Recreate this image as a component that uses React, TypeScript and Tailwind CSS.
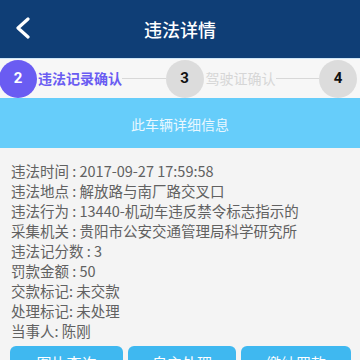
import React from 'react'

const font = { fontFamily: '"Noto Sans CJK SC", Roboto, "Noto Sans", sans-serif' }

const rows = [
  '违法时间 : 2017-09-27 17:59:58',
  '违法地点 : 解放路与南厂路交叉口',
  '违法行为 : 13440-机动车违反禁令标志指示的',
  '采集机关 : 贵阳市公安交通管理局科学研究所',
  '违法记分数 : 3',
  '罚款金额 : 50',
  '交款标记: 未交款',
  '处理标记: 未处理',
  '当事人: 陈刚',
]

function Step({ n, active }: { n: number; active?: boolean }) {
  return (
    <div
      className={`flex h-[38px] w-[38px] shrink-0 items-center justify-center rounded-full text-[15px] font-bold ${
        active ? 'bg-[#6a5cf2] text-white' : 'bg-[#dcdcdc] text-[#111]'
      }`}
      style={{ fontFamily: 'Roboto, "Liberation Sans", sans-serif' }}
    >
      {n}
    </div>
  )
}

export default function App() {
  return (
    <div className="h-[360px] w-[360px] overflow-hidden bg-[#f4f4f4]" style={font}>
      {/* header */}
      <div className="relative flex h-[58px] items-center justify-center bg-[#0f3e76]">
        <svg className="absolute left-[14px] top-[17px]" width="17" height="22" viewBox="0 0 17 22">
          <path d="M14 2 L4 11 L14 20" fill="none" stroke="white" strokeWidth="3.2" strokeLinecap="round" strokeLinejoin="round" />
        </svg>
        <span className="text-[18px] font-medium text-white">违法详情</span>
      </div>

      {/* steps */}
      <div className="flex h-[40px] items-center border-t border-[#cfe6f7] bg-[#f7f7f7]">
        <div className="-ml-[1px]">
          <Step n={2} active />
        </div>
        <span className="ml-[1px] text-[14px] font-bold text-[#6a5cf2]">违法记录确认</span>
        <div className="h-px flex-1 bg-[#d8d8d8]" />
        <Step n={3} />
        <span className="ml-[2px] text-[14px] text-[#d6d6d6]">驾驶证确认</span>
        <div className="h-px flex-1 bg-[#d8d8d8]" />
        <div className="mr-[3px]">
          <Step n={4} />
        </div>
      </div>

      {/* band */}
      <div className="flex h-[50px] items-center justify-center bg-[#66cdfa] pt-[2px]">
        <span className="text-[14px] text-[#eaf8ff]">此车辆详细信息</span>
      </div>

      {/* details */}
      <div className="pl-[11px] pt-[13px] text-[14.5px] leading-[20px] text-[#616161]">
        {rows.map(r => (
          <div key={r} className="whitespace-nowrap">{r}</div>
        ))}
      </div>

      {/* buttons */}
      <div className="mt-[5px] flex gap-[5px] pl-[10px]">
        <div className="flex h-[34px] w-[113px] items-center justify-center rounded-[6px] bg-[#3fb8f0] text-[15px] text-white">图片查询</div>
        <div className="flex h-[34px] w-[108px] items-center justify-center rounded-[6px] bg-[#3fb8f0] text-[15px] text-white">自主处理</div>
        <div className="flex h-[34px] w-[110px] items-center justify-center rounded-[6px] bg-[#3fb8f0] text-[15px] text-white">缴纳罚款</div>
      </div>
    </div>
  )
}
